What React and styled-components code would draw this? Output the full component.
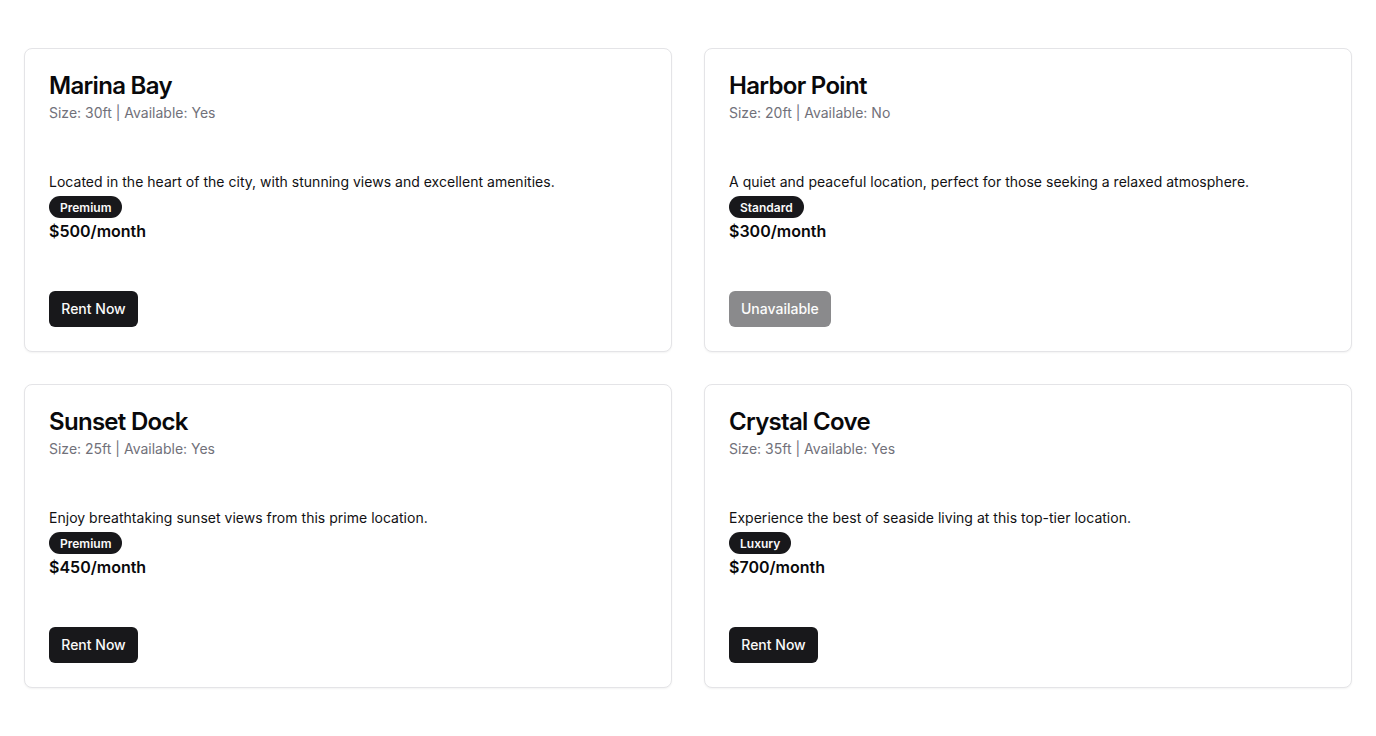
import React from 'react'
import styled, { createGlobalStyle } from 'styled-components'

const GlobalStyle = createGlobalStyle`
  body {
    margin: 0;
    background: #ffffff;
    font-family: Inter, "Noto Sans", sans-serif;
    color: #09090b;
  }
`

const Page = styled.div`
  padding: 48px 24px;
  display: grid;
  grid-template-columns: repeat(2, 1fr);
  gap: 32px;
`

const Card = styled.div`
  border: 1px solid #e4e4e7;
  border-radius: 8px;
  box-shadow: 0 1px 2px rgba(0, 0, 0, 0.05);
  background: #fff;
  height: 304px;
  box-sizing: border-box;
  display: flex;
  flex-direction: column;
`

const Header = styled.div`
  padding: 25px 24px 0;
  display: flex;
  flex-direction: column;
  gap: 5px;
`

const Title = styled.h3`
  margin: 0;
  font-size: 24px;
  line-height: 24px;
  font-weight: 600;
  letter-spacing: -0.7px;
`

const Meta = styled.p`
  margin: 0;
  font-size: 14px;
  line-height: 20px;
  color: #71717a;
`

const Content = styled.div`
  padding: 49px 24px 0;
  display: flex;
  flex-direction: column;
  align-items: flex-start;
`

const Description = styled.p`
  margin: 0;
  font-size: 14px;
  line-height: 20px;
  letter-spacing: 0.02px;
  color: #111113;
`

const Badge = styled.span`
  margin-top: 4px;
  display: inline-flex;
  align-items: center;
  height: 22px;
  padding: 0 11px;
  border-radius: 999px;
  background: #18181b;
  color: #fafafa;
  font-size: 12px;
  font-weight: 600;
`

const Price = styled.p`
  margin: 0;
  font-size: 16px;
  line-height: 26px;
  font-weight: 600;
`

const Footer = styled.div`
  margin-top: auto;
  padding: 0 24px 24px;
  display: flex;
`

const Button = styled.button`
  height: 36px;
  padding: 0 12px 1px 12px;
  min-width: 89px;
  border: none;
  border-radius: 6px;
  background: #18181b;
  color: #fafafa;
  font-family: inherit;
  font-size: 14px;
  font-weight: 500;
  cursor: pointer;
  opacity: ${p => (p.disabled ? 0.5 : 1)};
`

const slips = [
  {
    name: 'Marina Bay',
    size: 30,
    available: true,
    description: 'Located in the heart of the city, with stunning views and excellent amenities.',
    tier: 'Premium',
    price: 500,
  },
  {
    name: 'Harbor Point',
    size: 20,
    available: false,
    description: 'A quiet and peaceful location, perfect for those seeking a relaxed atmosphere.',
    tier: 'Standard',
    price: 300,
  },
  {
    name: 'Sunset Dock',
    size: 25,
    available: true,
    description: 'Enjoy breathtaking sunset views from this prime location.',
    tier: 'Premium',
    price: 450,
  },
  {
    name: 'Crystal Cove',
    size: 35,
    available: true,
    description: 'Experience the best of seaside living at this top-tier location.',
    tier: 'Luxury',
    price: 700,
  },
]

const SlipCard = ({slip}) =>
  <Card>
    <Header>
      <Title>{slip.name}</Title>
      <Meta>Size: {slip.size}ft | Available: {slip.available ? 'Yes' : 'No'}</Meta>
    </Header>
    <Content>
      <Description>{slip.description}</Description>
      <Badge>{slip.tier}</Badge>
      <Price>${slip.price}/month</Price>
    </Content>
    <Footer>
      <Button disabled={!slip.available}>
        {slip.available ? 'Rent Now' : 'Unavailable'}
      </Button>
    </Footer>
  </Card>

const App = () =>
  <>
    <GlobalStyle/>
    <Page>
      {slips.map(slip => <SlipCard key={slip.name} slip={slip}/>)}
    </Page>
  </>

export default App
